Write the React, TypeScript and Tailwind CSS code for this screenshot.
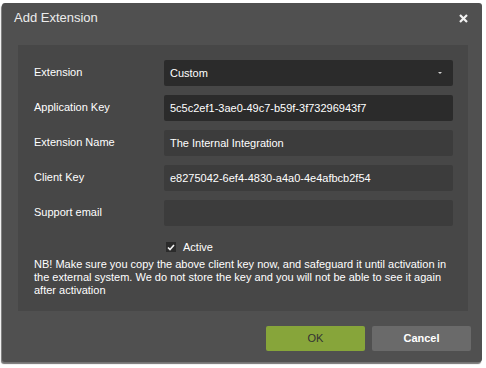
const fields = [
  { label: "Extension", value: "Custom", dark: true, select: true },
  { label: "Application Key", value: "5c5c2ef1-3ae0-49c7-b59f-3f73296943f7", dark: true },
  { label: "Extension Name", value: "The Internal Integration" },
  { label: "Client Key", value: "e8275042-6ef4-4830-a4a0-4e4afbcb2f54" },
  { label: "Support email", value: "" },
];

export default function App() {
  return (
    <div
      className="min-h-screen bg-white pt-[3px] pl-[2px]"
      style={{ fontFamily: '"Liberation Sans", Arial, sans-serif' }}
    >
      <div className="w-[480px] h-[359px] bg-[#505050] rounded-[3px] shadow-[-1px_2px_1px_rgba(0,0,0,0.55)] flex flex-col">
        {/* Header */}
        <div className="h-[30px] pl-[12px] pr-[12px] flex items-center justify-between">
          <span className="text-[13px] text-[#ececec]">Add Extension</span>
          <svg width="9" height="9" viewBox="0 0 9 9" className="mr-[2px]">
            <path d="M1 1L8 8M8 1L1 8" stroke="#f2f2f2" strokeWidth="2.2" />
          </svg>
        </div>

        {/* Body panel */}
        <div className="mt-[12px] ml-[16px] mr-[14px] h-[266px] bg-[#474747] pt-[15px] pl-[16px] pr-[15px]">
          <div className="flex flex-col gap-[9px]">
            {fields.map((f) => (
              <div key={f.label} className="flex items-center h-[26px]">
                <div className="w-[130px] text-[11px] text-white -mt-[1px]">{f.label}</div>
                <div
                  className={`flex-1 h-[26px] rounded-[2px] flex items-center justify-between pl-[6px] pr-[11px] text-[11px] text-white ${
                    f.dark ? "bg-[#2b2b2b]" : "bg-[#3c3c3c]"
                  }`}
                >
                  <span>{f.value}</span>
                  {f.select && (
                    <svg width="4" height="3" viewBox="0 0 4 3">
                      <path d="M0 0H4L2 2Z" fill="#cfcfcf" />
                    </svg>
                  )}
                </div>
              </div>
            ))}
          </div>

          <div className="mt-[15px] h-[12px] flex items-center pl-[132px]">
            <div className="w-[10px] h-[10px] bg-[#2b2b2b] flex items-center justify-center">
              <svg width="8" height="7" viewBox="0 0 8 7">
                <path d="M1 3.5L3 5.5L7 1" stroke="#f2f2f2" strokeWidth="1.6" fill="none" />
              </svg>
            </div>
            <span className="ml-[7px] text-[11px] text-white">Active</span>
          </div>

          <p className="mt-[5px] text-[11px] leading-[13px] text-white">
            NB! Make sure you copy the above client key now, and safeguard it until activation in the external
            system. We do not store the key and you will not be able to see it again after activation
          </p>
        </div>

        {/* Footer */}
        <div className="mt-[15px] flex justify-end gap-[7px] pr-[11px]">
          <button className="w-[99px] h-[25px] rounded-[2px] bg-[#87a53a] text-[11px] text-[#333333]">OK</button>
          <button className="w-[99px] h-[25px] rounded-[2px] bg-[#6a6a6a] text-[11px] font-bold text-white">
            Cancel
          </button>
        </div>
      </div>
    </div>
  );
}
